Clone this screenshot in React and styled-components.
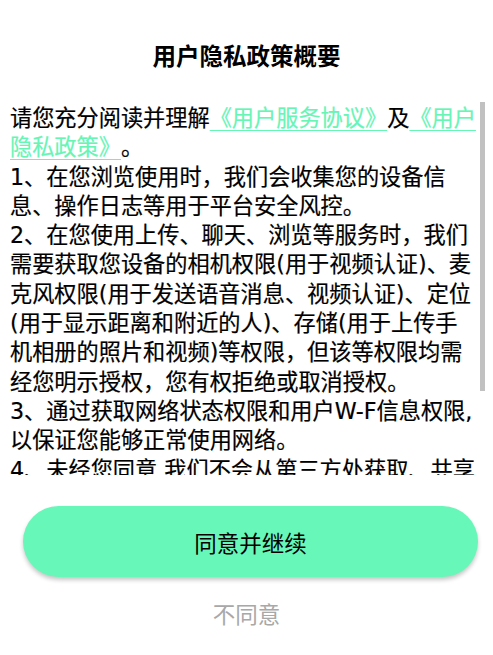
import React from "react";
import styled, { createGlobalStyle } from "styled-components";

const GlobalStyle = createGlobalStyle`
  html, body {
    margin: 0;
    padding: 0;
    background: #fff;
  }
  body {
    font-family: Roboto, "Noto Sans CJK SC", sans-serif;
  }
`;

const Page = styled.div`
  display: flex;
  flex-direction: column;
  height: 655px;
  background: #fff;
  overflow: hidden;
`;

const Title = styled.h1`
  margin: 0;
  padding-top: 43px;
  line-height: 28px;
  font-size: 23.5px;
  font-weight: 700;
  color: #000;
  text-align: center;
`;

const ScrollArea = styled.div`
  position: relative;
  width: 475px;
  height: 373px;
  margin: 31px 0 0 10px;
  overflow: hidden;
`;

// scroll indicator, drawn over the right edge of the text box
const Thumb = styled.div`
  position: absolute;
  top: 0;
  right: 0;
  width: 5px;
  height: 289px;
  background: #c1c1c1;
`;

const Body = styled.div`
  width: 467.2px;
  padding-top: 2px;
  font-family: "DejaVu Sans", "Noto Sans CJK SC", sans-serif;
  font-size: 22.2px;
  line-height: 29.3px;
  color: #000;
  -webkit-text-stroke: 0.2px #000;
  text-spacing-trim: space-all;
`;

const Link = styled.a`
  color: #67f5b6;
  -webkit-text-stroke: 0.2px #67f5b6;
  text-decoration: underline;
  text-underline-offset: 4px;
  text-decoration-thickness: 1px;
`;

const AgreeButton = styled.button`
  display: flex;
  align-items: center;
  justify-content: center;
  height: 71px;
  margin: 31px 15px 0 23px;
  border: none;
  border-radius: 36px;
  background: #67f7b8;
  box-shadow: 0 3px 4px rgba(0, 0, 0, 0.22);
  font-family: inherit;
  font-size: 22.5px;
  color: #000;
`;

const RejectButton = styled.button`
  align-self: center;
  margin-top: 23px;
  padding: 0;
  border: none;
  background: none;
  font-family: inherit;
  font-size: 22.5px;
  line-height: 30px;
  color: #a8a8a8;
`;

const App = () => (
  <Page>
    <GlobalStyle />
    <Title>用户隐私政策概要</Title>
    <ScrollArea>
      <Body>
        请您充分阅读并理解<Link>《用户服务协议》</Link>及<Link>《用户隐私政策》</Link>。
        <br />
        1、在您浏览使用时，我们会收集您的设备信息、操作日志等用于平台安全风控。
        <br />
        2、在您使用上传、聊天、浏览等服务时，我们需要获取您设备的相机权限(用于视频认证)、麦克风权限(用于发送语音消息、视频认证)、定位(用于显示距离和附近的人)、存储(用于上传手机相册的照片和视频)等权限，但该等权限均需经您明示授权，您有权拒绝或取消授权。
        <br />
        3、通过获取网络状态权限和用户W-F信息权限,以保证您能够正常使用网络。
        <br />
        4、未经您同意,我们不会从第三方处获取、共享或向其提供您的信息。
        <br />
        5、您可以查询、更正、删除您的个人信息，我们也提供账户注销的渠道。
      </Body>
      <Thumb />
    </ScrollArea>
    <AgreeButton>同意并继续</AgreeButton>
    <RejectButton>不同意</RejectButton>
  </Page>
);

export default App;
